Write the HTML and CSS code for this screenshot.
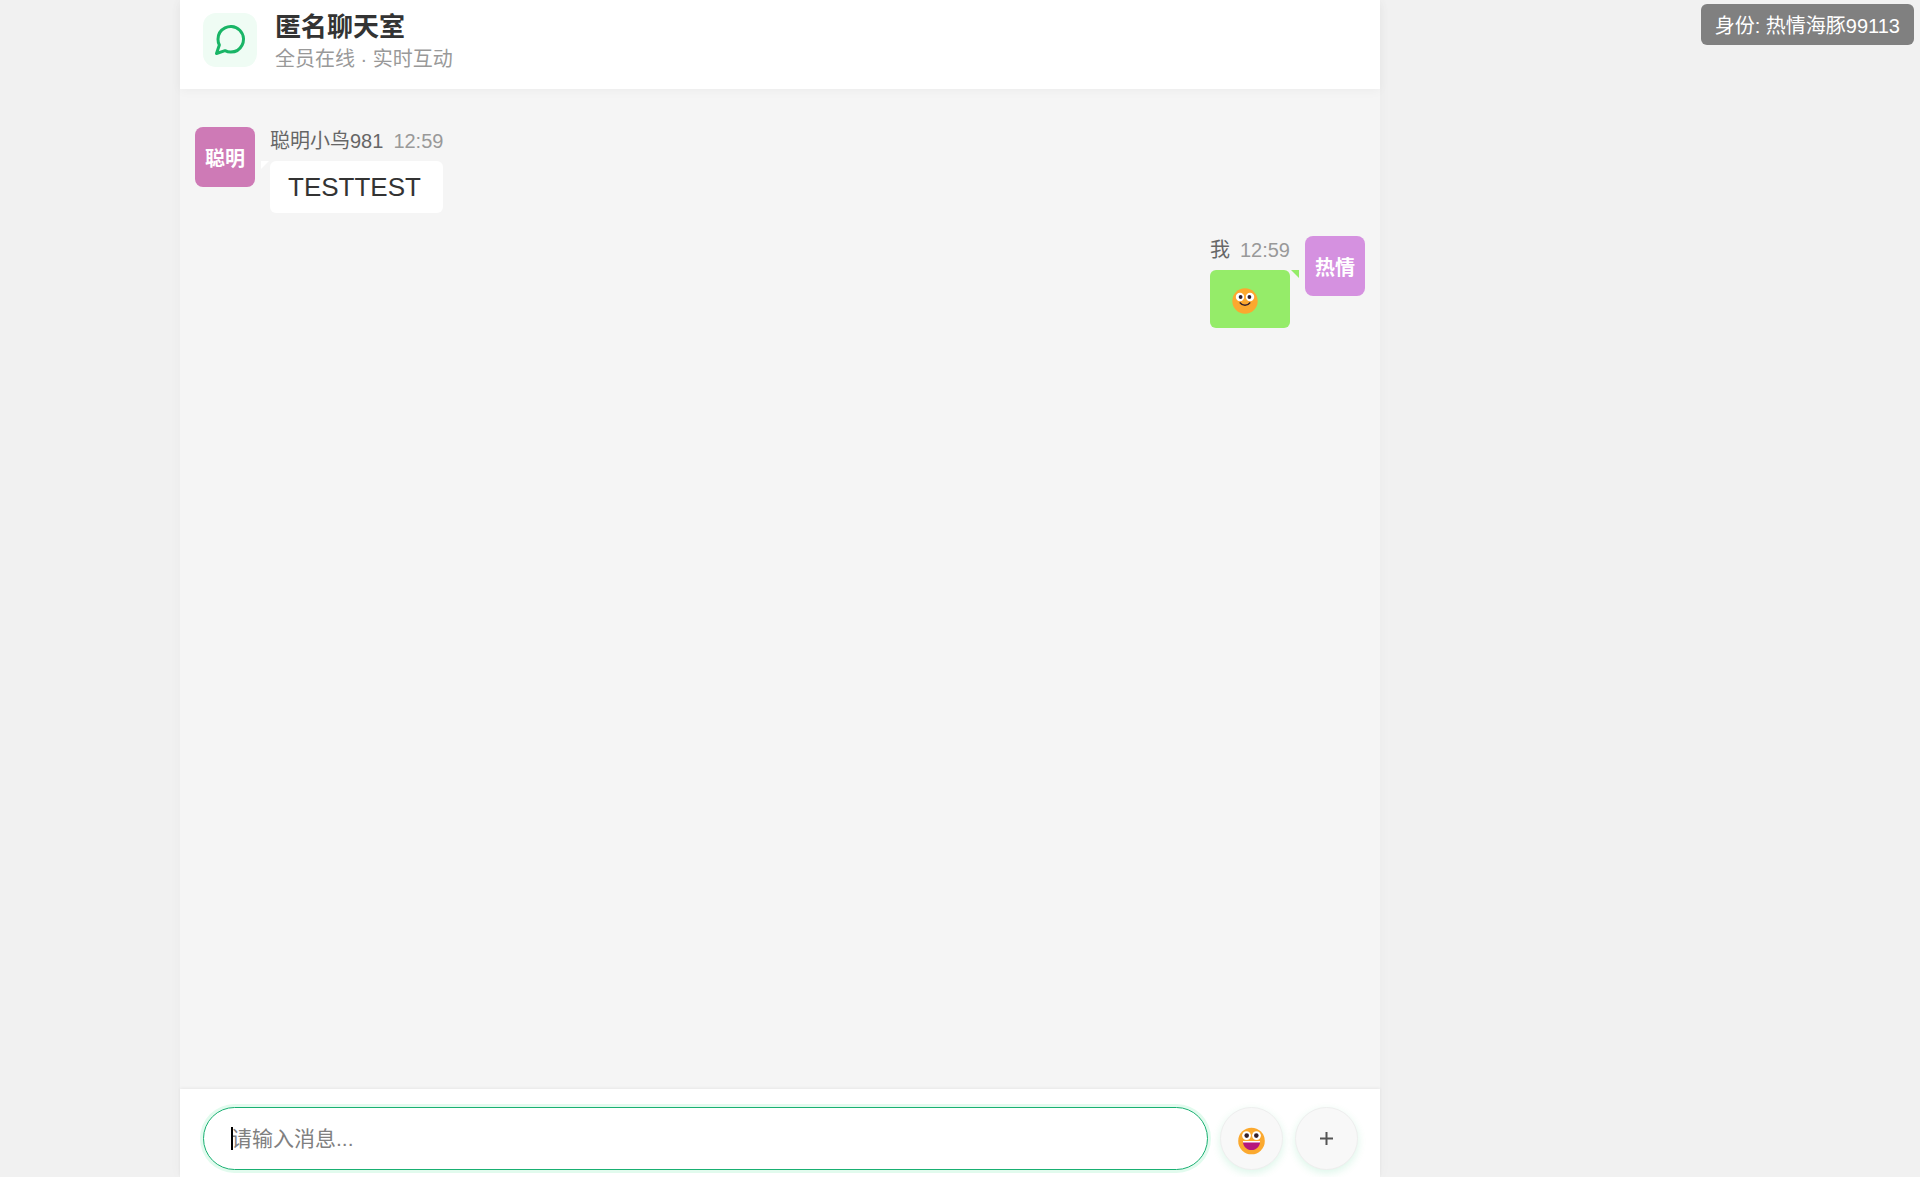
FILE: index.html
```html
<!DOCTYPE html>
<html lang="zh-CN">
<head>
<meta charset="utf-8">
<meta name="viewport" content="width=device-width, initial-scale=1">
<title>匿名聊天室</title>
<link rel="stylesheet" href="styles.css">
</head>
<body>
<div class="identity">身份: 热情海豚99113</div>
<div class="chat">
  <header class="chat-header">
    <div class="logo">
      <svg viewBox="0 0 24 24" width="36" height="36" fill="none" stroke="currentColor" stroke-width="2" stroke-linecap="round" stroke-linejoin="round" aria-hidden="true"><path d="M21 11.5a8.38 8.38 0 0 1-.9 3.8 8.5 8.5 0 0 1-7.6 4.7 8.38 8.38 0 0 1-3.8-.9L3 21l1.9-5.7a8.38 8.38 0 0 1-.9-3.8 8.5 8.5 0 0 1 4.7-7.6 8.38 8.38 0 0 1 3.8-.9h.5a8.48 8.48 0 0 1 8 8v.5z"/></svg>
    </div>
    <div class="heading">
      <h1 class="title">匿名聊天室</h1>
      <p class="subtitle">全员在线 · 实时互动</p>
    </div>
  </header>
  <main class="messages">
    <article class="message">
      <div class="avatar avatar-bird">聪明</div>
      <div class="content">
        <div class="meta"><span>聪明小鸟981</span><time class="time">12:59</time></div>
        <div class="bubble">TESTTEST</div>
      </div>
    </article>
    <article class="message message-own">
      <div class="avatar avatar-dolphin">热情</div>
      <div class="content">
        <div class="meta"><span>我</span><time class="time">12:59</time></div>
        <div class="bubble bubble-emoji">
          <svg viewBox="0 0 26 26" width="26" height="26" role="img" aria-label="微笑">
            <circle cx="13" cy="13" r="12.7" fill="#fca82f"/>
            <circle cx="8" cy="9" r="4.2" fill="#fff"/><circle cx="18" cy="9" r="4.2" fill="#fff"/>
            <circle cx="8.6" cy="9" r="1.9" fill="#35202c"/><circle cx="17.4" cy="9" r="1.9" fill="#35202c"/>
            <path d="M8.2 14.8c2.2 3.2 7.4 3.2 9.6 0" fill="none" stroke="#35202c" stroke-width="1.5" stroke-linecap="round"/>
          </svg>
        </div>
      </div>
    </article>
  </main>
  <form class="composer">
    <div class="field">
      <input class="input" type="text" aria-label="消息" placeholder="请输入消息..." autocomplete="off">
      <span class="caret"></span>
    </div>
    <button class="round" type="button" aria-label="表情">
      <svg class="face" viewBox="0 0 28 28" width="28" height="28" aria-hidden="true">
        <circle cx="13.5" cy="14" r="13.3" fill="#fba92f"/>
        <circle cx="8.5" cy="8.6" r="4.4" fill="#fff"/><circle cx="18.5" cy="8.6" r="4.4" fill="#fff"/>
        <circle cx="8.7" cy="8.6" r="2.3" fill="#35202c"/><circle cx="18.3" cy="8.6" r="2.3" fill="#35202c"/>
        <path d="M4.9 14.2h17.2c0 5-3.6 8.8-8.6 8.8s-8.6-3.8-8.6-8.8z" fill="#b5177d"/>
        <path d="M4.9 14h17.2l-.2 1.4H5.1z" fill="#fff"/>
      </svg>
    </button>
    <button class="round" type="button" aria-label="更多">
      <svg viewBox="0 0 14 14" width="14" height="14" aria-hidden="true"><path d="M6.5 0v13M0 6.5h13" stroke="#555" stroke-width="2"/></svg>
    </button>
  </form>
</div>
</body>
</html>
```
FILE: styles.css
```css
* {
  box-sizing: border-box;
}

body {
  margin: 0;
  background: #f1f1f1;
  color: #333;
  font-family: "Liberation Sans", "Noto Sans CJK SC", sans-serif;
}

.chat {
  display: flex;
  flex-direction: column;
  width: 62.5%;
  min-height: 100vh;
  margin-left: 180px;
  background: #f5f5f5;
  box-shadow: 0 0 13px rgba(0, 0, 0, 0.03);
}

.chat-header {
  display: flex;
  align-items: center;
  gap: 18px;
  padding: 7px 23px 16px;
  background: #fff;
  box-shadow: 0 2px 10px rgba(0, 0, 0, 0.04);
}

.logo {
  display: grid;
  place-items: center;
  width: 54px;
  height: 54px;
  border-radius: 13px;
  background: #effcf4;
  color: #19b566;
}

.heading {
  padding-top: 2px;
}

.title {
  margin: 0;
  font-size: 26px;
  line-height: 36px;
}

.subtitle {
  margin: 0;
  color: #999;
  font-size: 20px;
  line-height: 28px;
}

.messages {
  flex: 1;
  display: flex;
  flex-direction: column;
  gap: 23px;
  padding: 38px 15px;
}

.message {
  display: flex;
  align-items: flex-start;
  gap: 15px;
}

.message-own {
  flex-direction: row-reverse;
}

.avatar {
  display: grid;
  place-items: center;
  width: 60px;
  height: 60px;
  border-radius: 8px;
  color: #fff;
  font-size: 20px;
  font-weight: bold;
}

.avatar-bird {
  background: #ce7ab6;
}

.avatar-dolphin {
  background: #d591e0;
}

.meta {
  display: flex;
  gap: 10px;
  padding-top: 1px;
  margin-bottom: 7px;
  color: #666;
  font-size: 20px;
  line-height: 26px;
}

.time {
  color: #999;
}

.bubble {
  position: relative;
  padding: 10px 18px;
  border-radius: 6px;
  background: #fff;
  font-size: 26px;
  line-height: 32px;
}

.bubble::before {
  content: "";
  position: absolute;
  top: 0;
  left: -9px;
  border-top: 8px solid #fff;
  border-right: 8px solid transparent;
}

.bubble-emoji {
  display: flex;
  height: 58px;
  padding: 18px 22px;
  background: #95ec69;
}

.bubble-emoji::before {
  left: auto;
  right: -9px;
  border-top-color: #95ec69;
  border-left: 8px solid transparent;
  border-right-width: 0;
}

.composer {
  display: flex;
  gap: 12px;
  padding: 18px 22px 7px 23px;
  background: #fff;
  box-shadow: 0 -1px 3px rgba(0, 0, 0, 0.06);
}

.field {
  position: relative;
  flex: 1;
}

.input {
  width: 100%;
  height: 63px;
  padding: 0 27px;
  border: 1px solid #19b072;
  border-radius: 32px;
  outline: none;
  background: #fff;
  box-shadow: 0 0 0 3px #e2fbee;
  color: #333;
  font-family: inherit;
  font-size: 21px;
}

.input::placeholder {
  color: #808080;
}

.caret {
  position: absolute;
  top: 20px;
  left: 28px;
  width: 2px;
  height: 23px;
  background: #000;
}

.round {
  display: grid;
  place-items: center;
  width: 63px;
  height: 63px;
  padding: 0;
  border: 1px solid #eee;
  border-radius: 50%;
  background: #f8f8f8;
  box-shadow: 0 3px 8px rgba(7, 193, 96, 0.14);
}

.face {
  margin-top: 4px;
}

.identity {
  position: fixed;
  top: 4px;
  right: 6px;
  padding: 8px 14px 4px;
  border-radius: 6px;
  background: #808080;
  color: #fff;
  font-size: 20px;
  line-height: 29px;
}
```
